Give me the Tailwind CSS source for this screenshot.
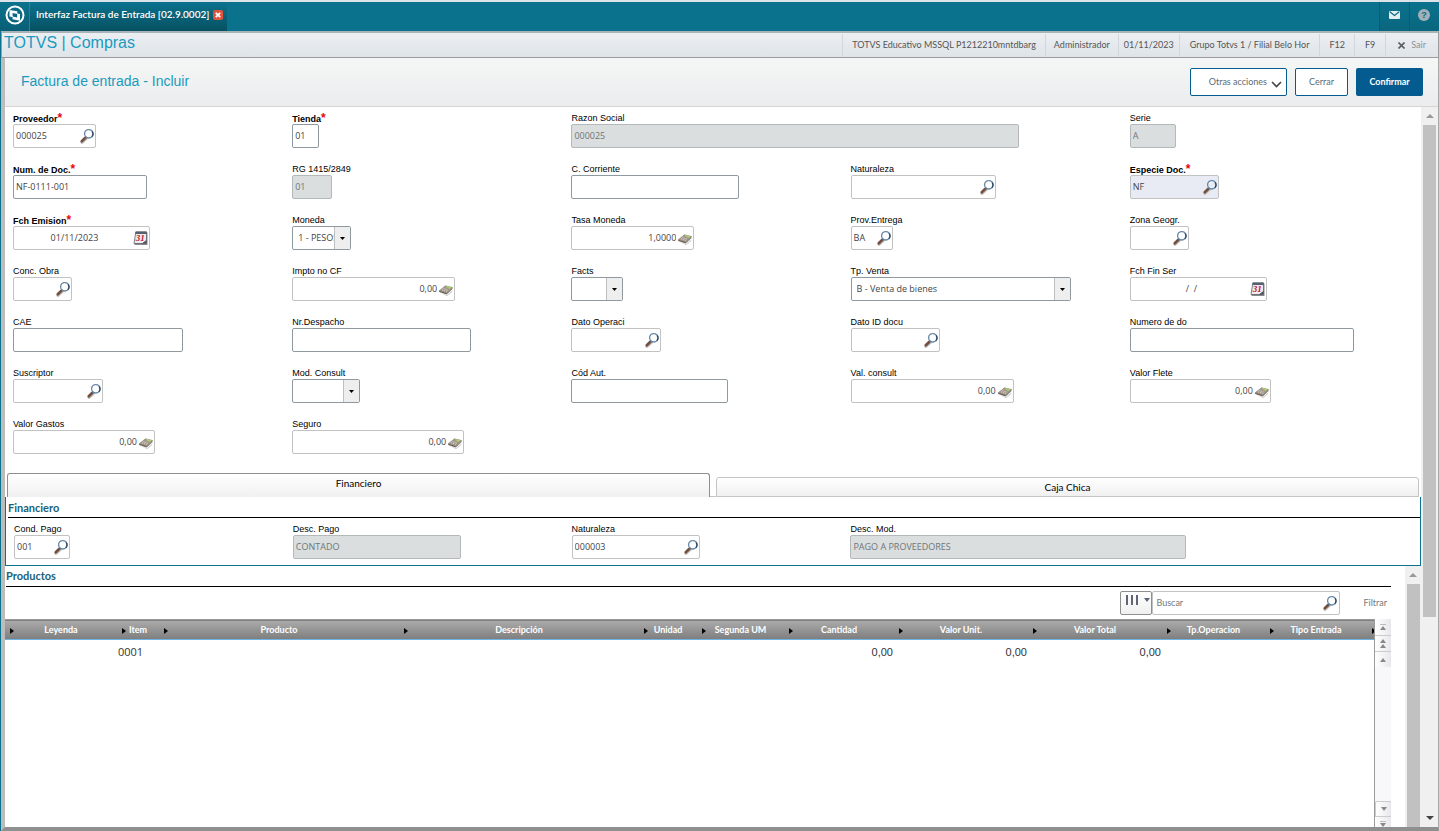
<!DOCTYPE html>
<html lang="es">
<head>
    <meta charset="UTF-8">
    <meta name="viewport" content="width=device-width, initial-scale=1.0">
    <title>Interfaz Factura de Entrada</title>
    <script src="https://cdn.jsdelivr.net/npm/@tailwindcss/browser@4"></script>
    <script>
        // Campos de la cabecera de la factura, en orden de lectura
        const headerFields = [
            { id: 'proveedor', label: 'Proveedor', type: 'lookup', value: '000025', width: 'w-[83px]', required: true },
            { id: 'tienda', label: 'Tienda', type: 'text', value: '01', width: 'w-[27px]', required: true },
            { id: 'razon', label: 'Razon Social', type: 'disabled', value: '000025', width: 'w-[448px]', span: 'col-span-2' },
            { id: 'serie', label: 'Serie', type: 'disabled', value: 'A', width: 'w-[46px]' },

            { id: 'numdoc', label: 'Num. de Doc.', type: 'text', value: 'NF-0111-001', width: 'w-[134px]', required: true },
            { id: 'rg', label: 'RG 1415/2849', type: 'disabled', value: '01', width: 'w-[40px]' },
            { id: 'corriente', label: 'C. Corriente', type: 'text', value: '', width: 'w-[168px]' },
            { id: 'naturaleza', label: 'Naturaleza', type: 'lookup', value: '', width: 'w-[145px]' },
            { id: 'especie', label: 'Especie Doc.', type: 'lookup', value: 'NF', width: 'w-[89px]', required: true, bg: 'bg-[#e8ebf3]' },

            { id: 'emision', label: 'Fch Emision', type: 'date', value: '01/11/2023', width: 'w-[137px]', required: true },
            { id: 'moneda', label: 'Moneda', type: 'select', value: '1 - PESOS', width: 'w-[59px]' },
            { id: 'tasa', label: 'Tasa Moneda', type: 'calc', value: '1,0000', width: 'w-[123px]' },
            { id: 'entrega', label: 'Prov.Entrega', type: 'lookup', value: 'BA', width: 'w-[42px]' },
            { id: 'zona', label: 'Zona Geogr.', type: 'lookup', value: '', width: 'w-[59px]' },

            { id: 'obra', label: 'Conc. Obra', type: 'lookup', value: '', width: 'w-[59px]' },
            { id: 'impto', label: 'Impto no CF', type: 'calc', value: '0,00', width: 'w-[163px]' },
            { id: 'facts', label: 'Facts', type: 'select', value: '', width: 'w-[52px]' },
            { id: 'venta', label: 'Tp. Venta', type: 'select', value: 'B - Venta de bienes', width: 'w-[220px]' },
            { id: 'finser', label: 'Fch Fin Ser', type: 'date', value: '/  /', width: 'w-[137px]' },

            { id: 'cae', label: 'CAE', type: 'text', value: '', width: 'w-[170px]' },
            { id: 'despacho', label: 'Nr.Despacho', type: 'text', value: '', width: 'w-[179px]' },
            { id: 'operaci', label: 'Dato Operaci', type: 'lookup', value: '', width: 'w-[90px]' },
            { id: 'iddocu', label: 'Dato ID docu', type: 'lookup', value: '', width: 'w-[89px]' },
            { id: 'numerodo', label: 'Numero de do', type: 'text', value: '', width: 'w-[224px]' },

            { id: 'suscriptor', label: 'Suscriptor', type: 'lookup', value: '', width: 'w-[90px]' },
            { id: 'modconsult', label: 'Mod. Consult', type: 'select', value: '', width: 'w-[68px]' },
            { id: 'codaut', label: 'Cód Aut.', type: 'text', value: '', width: 'w-[157px]' },
            { id: 'valconsult', label: 'Val. consult', type: 'calc', value: '0,00', width: 'w-[163px]' },
            { id: 'flete', label: 'Valor Flete', type: 'calc', value: '0,00', width: 'w-[141px]' },

            { id: 'gastos', label: 'Valor Gastos', type: 'calc', value: '0,00', width: 'w-[142px]' },
            { id: 'seguro', label: 'Seguro', type: 'calc', value: '0,00', width: 'w-[172px]' }
        ];

        // Campos de la solapa Financiero
        const financeFields = [
            { id: 'condpago', label: 'Cond. Pago', type: 'lookup', value: '001', width: 'w-[56px]' },
            { id: 'descpago', label: 'Desc. Pago', type: 'disabled', value: 'CONTADO', width: 'w-[168px]' },
            { id: 'natfin', label: 'Naturaleza', type: 'lookup', value: '000003', width: 'w-[128px]' },
            { id: 'descmod', label: 'Desc. Mod.', type: 'disabled', value: 'PAGO A PROVEEDORES', width: 'w-[336px]', span: 'col-span-2' }
        ];

        // Columnas de la grilla de productos
        const columns = [
            { title: 'Leyenda', width: 'w-[112px]', value: '' },
            { title: 'Item', width: 'w-[42px]', value: '0001' },
            { title: 'Producto', width: 'w-[240px]', value: '' },
            { title: 'Descripción', width: 'w-[240px]', value: '' },
            { title: 'Unidad', width: 'w-[58px]', value: '' },
            { title: 'Segunda UM', width: 'w-[87px]', value: '' },
            { title: 'Cantidad', width: 'w-[110px]', value: '0,00' },
            { title: 'Valor Unit.', width: 'w-[134px]', value: '0,00' },
            { title: 'Valor Total', width: 'w-[134px]', value: '0,00' },
            { title: 'Tp.Operacion', width: 'w-[103px]', value: '' },
            { title: 'Tipo Entrada', width: 'w-[102px]', value: '' },
            { title: '', width: '', value: '' }
        ];

        const icons = {
            lookup: '<svg class="size-4" aria-hidden="true"><use href="#i-lens"/></svg>',
            date: '<svg class="size-4" aria-hidden="true"><use href="#i-calendar"/></svg>',
            calc: '<svg class="size-4" aria-hidden="true"><use href="#i-calc"/></svg>'
        };

        function renderControl(f) {
            if (f.type === 'select') {
                return `
                    <div class="relative h-6 ${f.width}">
                        <select id="${f.id}" class="block h-full w-full appearance-none overflow-hidden rounded-xs border border-[#8f9aa0] bg-white pl-[5px] pr-4 text-[#444]">
                            <option>${f.value}</option>
                        </select>
                        <span class="pointer-events-none absolute inset-y-px right-px flex w-4 items-center justify-center border-l border-[#bfbfbf] bg-[#eee]">
                            <svg class="h-[3px] w-[5px]" viewBox="0 0 5 3"><path d="M0 0h5L2.5 3z" fill="#000"/></svg>
                        </span>
                    </div>`;
            }
            if (f.type === 'disabled') {
                return `<input id="${f.id}" value="${f.value}" disabled class="block h-6 rounded-xs border border-[#b3b9bb] bg-[#dadedf] px-[2px] pb-px text-[#6f7678] ${f.width}">`;
            }
            if (f.type === 'text') {
                return `<input id="${f.id}" value="${f.value}" class="block h-6 rounded-xs border border-[#8f9aa0] bg-white px-[2px] pb-px text-[#444] ${f.width}">`;
            }
            let align = 'text-left';
            if (f.type === 'calc') align = 'text-right pr-px';
            if (f.type === 'date') align = 'text-center';
            return `
                <div class="flex h-6 items-center rounded-xs border border-[#c2c2c2] pl-[2px] ${f.bg || 'bg-white'} ${f.width}">
                    <input id="${f.id}" value="${f.value}" class="w-full min-w-0 bg-transparent whitespace-pre text-[#444] ${align}">
                    <button type="button" aria-label="Buscar ${f.label}" class="shrink-0">${icons[f.type]}</button>
                </div>`;
        }

        function renderField(f) {
            return `
                <div class="${f.span || ''}">
                    <label for="${f.id}" class="block h-3 leading-3 whitespace-nowrap text-black font-['Liberation_Sans'] ${f.required ? 'font-bold' : ''}">${f.label}${f.required ? '<span class="text-[12px] text-red-600">*</span>' : ''}</label>
                    ${renderControl(f)}
                </div>`;
        }

        window.onload = function () {
            document.getElementById('header-fields').innerHTML = headerFields.map(renderField).join('');
            document.getElementById('finance-fields').innerHTML = financeFields.map(renderField).join('');
            document.getElementById('grid-head').innerHTML = columns.map(c => `
                <th class="relative p-0 font-bold whitespace-nowrap ${c.width}">
                    <svg class="absolute left-[5px] top-[8px] h-[6px] w-[4px]" viewBox="0 0 4 6"><path d="M0 0l4 3-4 3z" fill="#000"/></svg>${c.title}
                </th>`).join('');
            document.getElementById('grid-row').innerHTML = columns.map(c => `
                <td class="px-px ${c.value.includes(',') ? "text-right font-['Liberation_Sans']" : 'text-left'}">${c.value}</td>`).join('');
        };
    </script>
</head>
<body class="flex h-screen flex-col overflow-hidden bg-[#0b728d] text-[9px] font-['Open_Sans',sans-serif]">
    <svg class="hidden">
        <defs>
            <linearGradient id="g-lens" x1="0" y1="0" x2="1" y2="1">
                <stop offset="0" stop-color="#7fb8e6"/>
                <stop offset="1" stop-color="#dff2ff"/>
            </linearGradient>
        </defs>
        <symbol id="i-lens" viewBox="0 0 16 16">
            <path d="M3 14.500l4.500-4.200" stroke="#c4c4c4" stroke-width="3" stroke-linecap="round"/>
            <path d="M2.800 13.200l3.600-3.400" stroke="#76503f" stroke-width="2.800" stroke-linecap="round"/>
            <path d="M6 10.200l1.500-1.400" stroke="#555f6b" stroke-width="1.800"/>
            <circle cx="9.800" cy="5.800" r="4.200" fill="url(#g-lens)" stroke="#6486a6" stroke-width="1.300"/>
            <path d="M13 3.300a4.200 4.200 0 0 1-.3 5.500" fill="none" stroke="#2f4a66" stroke-width="1.300"/>
            <path d="M7.500 5a2.600 2.600 0 0 1 2.500-2" fill="none" stroke="#fff" stroke-width="1.200"/>
        </symbol>
        <symbol id="i-calendar" viewBox="0 0 16 16">
            <path d="M3.500 2.500H14.500v12.500H1.500z" fill="#8a8a8a"/>
            <path d="M2.800 2h10.700v11.500H1z" fill="#ececf0" stroke="#5c5f68" stroke-width=".8"/>
            <path d="M2.600 1.600h11v2.400H2.400z" fill="#56606e"/>
            <path d="M8.500 13.500l5-3.800v3.800z" fill="#55555e"/>
            <path d="M8.300 13.300l1.200-2.400 3.500-.6z" fill="#fff"/>
            <text x="2.800" y="10.800" font-family="Liberation Serif" font-size="9" font-weight="bold" font-style="italic" fill="#c4122a">31</text>
        </symbol>
        <symbol id="i-calc" viewBox="0 0 16 16">
            <path d="M2 11.500l7 2.800 5.500-5-.5 2-5 4z" fill="#cfcfcf"/>
            <path d="M1.200 9.800L7.500 4.800l7 1.700-5.700 5.600z" fill="#a3988c" stroke="#857b71" stroke-width=".6"/>
            <path d="M1.200 9.800v1.200l7.600 2.600v-1.500z" fill="#6a6158"/>
            <path d="M8.800 12.100l5.700-5.600v1.500l-5.700 5.600z" fill="#857b71"/>
            <path d="M7.800 5.700l1.200-.7 4.500 1.300-1.900 1.700z" fill="#a9d070"/>
            <path d="M4 8.700l4.800 1.800M5.500 7.500l4.500 1.700" stroke="#ddd6cc" stroke-width=".9" stroke-dasharray="1.200 .8"/>
        </symbol>
    </svg>

    <!-- Barra superior -->
    <header class="flex h-[31px] shrink-0 border-t-2 border-[#dce4ea] bg-[#0b728d]">
        <a href="#" aria-label="Inicio" class="flex w-[30px] items-center justify-center border-r border-[#2d7f96] bg-linear-to-b from-[#0b728d] to-[#095f75] pb-1">
            <svg class="size-5" viewBox="0 0 20 20">
                <circle cx="10" cy="10" r="8.500" fill="none" stroke="#fff" stroke-width="2"/>
                <path d="M4.500 5l7.800 1.300v6.700L4.500 11.500z" fill="#fff"/>
                <path d="M7.500 7.700l7.500 1.300v6.700l-7.500-1.500z" fill="#fff"/>
                <path d="M7.600 8.100l4.600.9v3.500l-4.600-.9z" fill="#0a6a83"/>
            </svg>
        </a>
        <div class="flex items-center gap-1 bg-linear-to-b from-[#0b728d] to-[#075162] pl-1.5 pr-1 pb-1 text-[10px] font-semibold text-white font-['Lato']">
            <span>Interfaz Factura de Entrada [02.9.0002]</span>
            <button type="button" aria-label="Cerrar solapa">
                <svg class="size-[10px]" viewBox="0 0 10 10"><rect width="10" height="10" rx="2" fill="#e0533c"/><path d="M2.800 2.800l4.400 4.400M7.200 2.800L2.800 7.200" stroke="#fff" stroke-width="1.800"/></svg>
            </button>
        </div>
        <div class="ml-auto flex">
            <button type="button" aria-label="Mensajes" class="flex w-[30px] items-center justify-center border-l border-[#075d74] bg-linear-to-b from-[#0b728d] to-[#0a667e] pb-1">
                <svg class="h-2 w-[11px]" viewBox="0 0 11 8"><rect width="11" height="8" rx="1" fill="#e3eef1"/><path d="M.8.800l4.700 3.700L10.200.8" fill="none" stroke="#0b6a83" stroke-width="1.200"/></svg>
            </button>
            <button type="button" aria-label="Ayuda" class="flex w-[30px] items-center justify-center border-l border-[#075d74] bg-linear-to-b from-[#0b728d] to-[#0a667e] pr-0.5 pb-1">
                <svg class="size-3" viewBox="0 0 12 12"><circle cx="6" cy="6" r="6" fill="#9fb0b8"/><text x="6" y="9.300" text-anchor="middle" font-family="Liberation Sans" font-size="9" font-weight="bold" fill="#0b6a83">?</text></svg>
            </button>
        </div>
    </header>

    <!-- Barra de módulo -->
    <div class="ml-px flex h-[27px] shrink-0 border border-t-2 border-[#9b9b9b] border-t-[#a9b4b8] bg-linear-to-b from-[#eceff2] to-[#dfe4e9] text-[#555] font-['Lato']">
        <h1 class="pl-[2px] text-[16px] leading-5 text-[#1a9abf] font-['Liberation_Sans']">TOTVS | Compras</h1>
        <div class="ml-auto flex items-center leading-[22px] whitespace-nowrap">
            <span class="border-l border-[#d3d7da] px-[9px]">TOTVS Educativo MSSQL P1212210mntdbarg</span>
            <span class="border-l border-[#d3d7da] px-[8px]">Administrador</span>
            <span class="border-l border-[#d3d7da] px-[5px]">01/11/2023</span>
            <span class="border-l border-[#d3d7da] px-[10px]">Grupo Totvs 1 / Filial Belo Hor</span>
            <span class="border-l border-[#d3d7da] px-[9px]">F12</span>
            <span class="border-l border-[#d3d7da] px-[10px]">F9</span>
            <a href="#" class="flex items-center gap-1.5 border-l border-[#d3d7da] pl-3 pr-3 text-[#8d9298]">
                <svg class="size-[7px]" viewBox="0 0 7 7"><path d="M.5.500l6 6M6.500.500l-6 6" stroke="#5a5f66" stroke-width="1.600"/></svg>Sair
            </a>
        </div>
    </div>

    <main class="ml-px flex min-h-0 grow flex-col border-b-4 border-l-4 border-r border-[#a8a8a8] border-b-[#8f8f8f] border-l-[#bcbcbc] bg-white">
        <!-- Título y acciones -->
        <div class="flex h-[49px] shrink-0 items-center gap-2 border-b border-[#d5d5d5] bg-linear-to-b from-[#f5f7f6] to-[#ebecee] pl-4 pr-[15px] font-['Lato']">
            <h2 class="mr-auto pb-0.5 text-[14px] text-[#1a9abf] font-['Liberation_Sans']">Factura de entrada - Incluir</h2>
            <button type="button" class="flex h-7 w-[97px] items-center justify-end gap-1 rounded-xs border border-[#045b8f] bg-white pr-1 text-[#5d6b74]">Otras acciones
                <svg class="mt-1 h-[7px] w-[11px]" viewBox="0 0 11 7"><path d="M1 1l4.500 4.500L10 1" fill="none" stroke="#444" stroke-width="1.600"/></svg>
            </button>
            <button type="button" class="h-7 w-[53px] rounded-xs border border-[#045b8f] bg-white text-[#5d6b74]">Cerrar</button>
            <button type="button" class="h-7 w-[67px] rounded-xs bg-[#045b8f] font-bold text-white">Confirmar</button>
        </div>

        <div class="flex min-h-0 grow">
            <div class="flex min-w-0 grow flex-col">
                <form id="header-fields" class="grid shrink-0 grid-cols-5 gap-y-[15px] pl-2 pr-3 pt-[5px]"></form>

                <!-- Solapas -->
                <div class="mt-[19px] flex h-6 shrink-0 items-end text-[10px] text-black font-['Lato']">
                    <button type="button" class="ml-0.5 h-6 flex-1 rounded-t-[3px] border border-b-0 border-[#8f8f8f] bg-linear-to-b from-white to-[#f0f0f0] pb-1">Financiero</button>
                    <div class="h-5 w-1.5 border-b border-[#c4c4c4]"></div>
                    <button type="button" class="mr-[2px] h-5 flex-1 rounded-t-[3px] border border-[#c4c4c4] bg-linear-to-b from-white to-[#f0f0f0]">Caja Chica</button>
                </div>

                <section class="h-[69px] shrink-0 border border-t-0 border-[#0b728d]">
                    <h3 class="ml-0.5 h-[21px] border-b border-black text-[11px] leading-[22px] font-bold text-[#1b6178] font-['Lato']">Financiero</h3>
                    <div id="finance-fields" class="grid grid-cols-5 pl-2 pr-3 pt-[5px]"></div>
                </section>

                <!-- Productos -->
                <section class="flex min-h-0 grow">
                    <div class="flex min-w-0 grow flex-col">
                        <h3 class="ml-px h-[21px] shrink-0 border-b border-black text-[11px] leading-5 font-bold text-[#1b6178] font-['Lato']">Productos</h3>
                        <div class="flex h-8 shrink-0 items-center justify-end">
                            <button type="button" aria-label="Columnas" class="flex h-6 w-8 items-start justify-between rounded-xs border border-[#8f8f8f] bg-linear-to-b from-white to-[#f0f0f0] pt-[3px] pl-1 pr-px">
                                <svg class="h-[11px] w-[25px]" viewBox="0 0 25 11"><path d="M2 0v10M7 0v10M12 0v10" stroke="#5f6577" stroke-width="2"/><path d="M19 3h6l-3 4z" fill="#5f6577"/></svg>
                            </button>
                            <div class="flex h-6 w-[188px] items-center rounded-xs border border-[#c2c2c2] pl-[3px] pr-px">
                                <input type="text" aria-label="Buscar" placeholder="Buscar" class="w-full min-w-0 placeholder:text-[#777] font-['Lato']">
                                <button type="button" aria-label="Buscar producto" class="shrink-0"><svg class="size-4"><use href="#i-lens"/></svg></button>
                            </div>
                            <button type="button" class="ml-[23px] mr-1 text-[#777] font-['Lato']">Filtrar</button>
                        </div>
                        <div class="flex min-h-0 grow">
                            <div class="min-w-0 grow overflow-hidden border-r border-[#9b9b9b]">
                                <table class="w-full table-fixed border-collapse">
                                    <thead>
                                        <tr id="grid-head" class="h-5 border-b border-t border-b-[#6fb4e4] border-t-[#999] bg-linear-to-b from-[#aaa] to-[#7f7f7f] text-white font-['Lato']"></tr>
                                    </thead>
                                    <tbody>
                                        <tr id="grid-row" class="h-6 text-[11px] text-[#333]"></tr>
                                    </tbody>
                                </table>
                            </div>
                            <div class="flex w-4 shrink-0 flex-col bg-[#f8f8fa]">
                                <button type="button" aria-label="Primero" class="flex h-[17px] items-center justify-center border-b border-[#ccc] bg-linear-to-r from-white to-[#e8e8ec]">
                                    <svg class="h-[6px] w-[6px]" viewBox="0 0 6 6"><path d="M0 .500h6" stroke="#bbb"/><path d="M3 2l3 4H0z" fill="#888"/></svg>
                                </button>
                                <button type="button" aria-label="Página anterior" class="flex h-4 items-center justify-center border-b border-[#ccc] bg-linear-to-r from-white to-[#e8e8ec]">
                                    <svg class="h-[9px] w-[6px]" viewBox="0 0 6 9"><path d="M3 0l3 4H0zM3 5l3 4H0z" fill="#888"/></svg>
                                </button>
                                <button type="button" aria-label="Anterior" class="flex h-[15px] items-center justify-center bg-linear-to-r from-white to-[#e8e8ec]">
                                    <svg class="h-1 w-[6px]" viewBox="0 0 6 4"><path d="M3 0l3 4H0z" fill="#888"/></svg>
                                </button>
                                <button type="button" aria-label="Siguiente" class="mt-auto flex h-4 items-center justify-center rounded-tl-xs border border-r-0 border-[#ccc] bg-linear-to-r from-white to-[#e8e8ec]">
                                    <svg class="h-1 w-[6px]" viewBox="0 0 6 4"><path d="M3 4l3-4H0z" fill="#888"/></svg>
                                </button>
                                <button type="button" aria-label="Página siguiente" class="flex h-[10px] items-end justify-center bg-linear-to-r from-white to-[#e8e8ec]">
                                    <svg class="h-[6px] w-[6px]" viewBox="0 0 6 6"><path d="M0 .500h6" stroke="#bbb"/><path d="M3 6l3-4H0z" fill="#888"/></svg>
                                </button>
                            </div>
                        </div>
                    </div>
                    <!-- Desplazamiento interno -->
                    <div class="ml-[14px] flex w-4 shrink-0 flex-col items-center bg-[#f0f0f0]">
                        <svg class="my-[7px] h-1 w-2 shrink-0" viewBox="0 0 8 4"><path d="M4 0l4 4H0z" fill="#999"/></svg>
                        <div class="w-[13px] grow bg-[#c1c1c1]"></div>
                    </div>
                </section>
            </div>
            <!-- Desplazamiento principal -->
            <div class="flex w-[17px] shrink-0 flex-col items-center bg-[#f0f0f0]">
                <svg class="my-[7px] h-1 w-2 shrink-0" viewBox="0 0 8 4"><path d="M4 0l4 4H0z" fill="#999"/></svg>
                <div class="h-[492px] w-[13px] bg-[#c1c1c1]"></div>
                <svg class="mt-auto mb-[7px] h-1 w-2 shrink-0" viewBox="0 0 8 4"><path d="M4 4l4-4H0z" fill="#444"/></svg>
            </div>
        </div>
    </main>
</body>
</html>
